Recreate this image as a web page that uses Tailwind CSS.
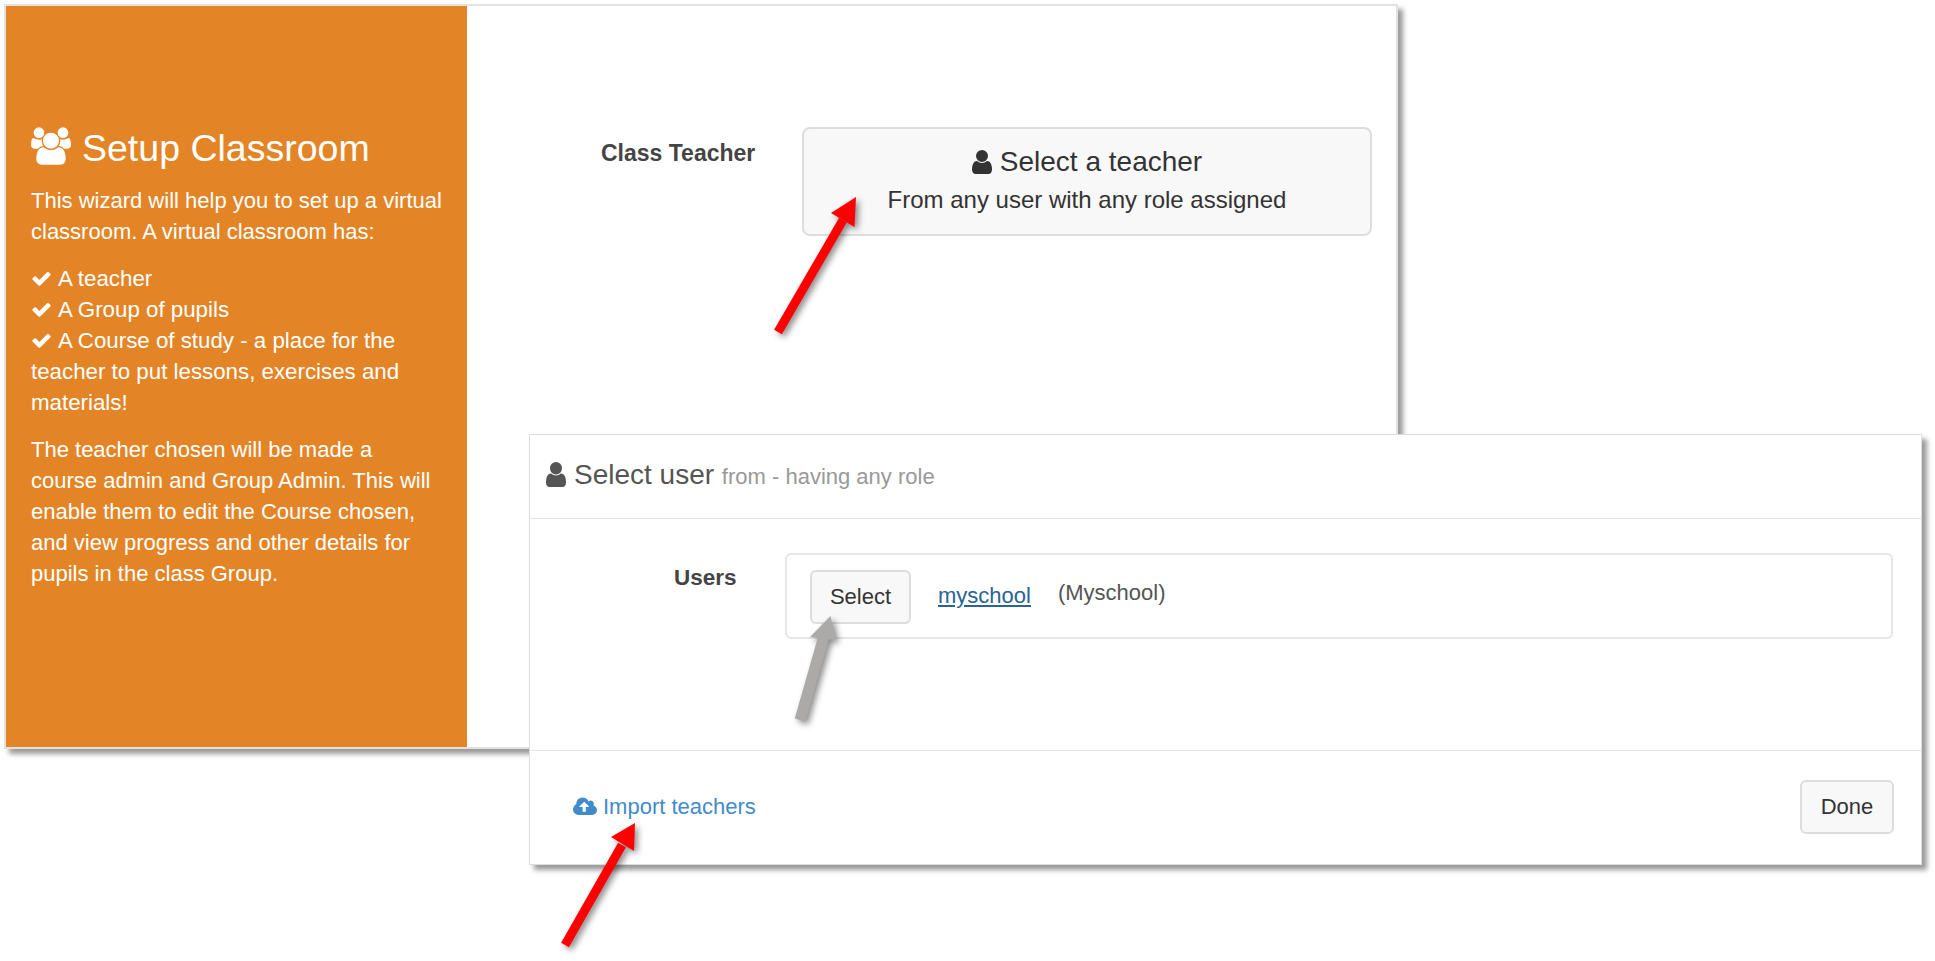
<!DOCTYPE html>
<html lang="en">
<head>
<meta charset="utf-8">
<title>Setup Classroom</title>
<script src="https://cdn.jsdelivr.net/npm/@tailwindcss/browser@4"></script>
</head>
<body class="bg-white font-['Liberation_Sans',Arial,sans-serif] text-[#333] overflow-hidden">
<div class="relative w-[1935px] h-[961px] overflow-hidden">

  <!-- Wizard window -->
  <section class="absolute left-[4px] top-[4px] w-[1394px] h-[745px] flex bg-white border-2 border-[#e2e2e2] shadow-[5px_5px_5px_rgba(0,0,0,0.4)]">
    <aside class="w-[461px] h-full bg-[#e38527] text-white pl-[25px] pr-[20px] pt-[122px] text-[22px] leading-[31px]">
      <h3 class="flex items-center gap-[11px] text-[37.5px] leading-[40px] mb-[17px]">
        <svg class="w-[40px] h-[38px] fill-white -mt-[4px]" viewBox="0 0 1920 1792"><path d="M593 896q-162 5-265 128h-134q-82 0-138-40.5t-56-118.5q0-353 124-353 6 0 43.5 21t97.5 42.5 119 21.5q67 0 133-23-5 37-5 66 0 139 81 256zm1071 637q0 120-73 189.5t-194 69.5h-874q-121 0-194-69.5t-73-189.5q0-53 3.5-103.5t14-109 26.5-108.5 43-97.5 62-81 85.5-53.5 111.5-20q10 0 43 21.5t73 48 107 48 135 21.5 135-21.5 107-48 73-48 43-21.5q61 0 111.5 20t85.5 53.5 62 81 43 97.5 26.5 108.5 14 109 3.5 103.5zm-1024-1277q0 106-75 181t-181 75-181-75-75-181 75-181 181-75 181 75 75 181zm704 384q0 159-112.5 271.5t-271.5 112.5-271.5-112.5-112.5-271.5 112.5-271.5 271.5-112.5 271.5 112.5 112.5 271.5zm576 225q0 78-56 118.5t-138 40.5h-134q-103-123-265-128 81-117 81-256 0-29-5-66 66 23 133 23 59 0 119-21.5t97.5-42.5 43.5-21q124 0 124 353zm-128-609q0 106-75 181t-181 75-181-75-75-181 75-181 181-75 181 75 75 181z"/></svg>
        <span>Setup Classroom</span>
      </h3>
      <p class="mb-[16px]">This wizard will help you to set up a virtual classroom. A virtual classroom has:</p>
      <p class="mb-[16px] text-[22.3px]">
        <svg class="inline-block w-[21px] h-[21px] fill-white align-[-3px] mr-[6px]" viewBox="0 0 1792 1792"><path d="M1671 566q0 40-28 68l-724 724-136 136q-28 28-68 28t-68-28l-136-136-362-362q-28-28-28-68t28-68l136-136q28-28 68-28t68 28l294 295 656-657q28-28 68-28t68 28l136 136q28 28 28 68z"/></svg>A teacher<br>
        <svg class="inline-block w-[21px] h-[21px] fill-white align-[-3px] mr-[6px]" viewBox="0 0 1792 1792"><path d="M1671 566q0 40-28 68l-724 724-136 136q-28 28-68 28t-68-28l-136-136-362-362q-28-28-28-68t28-68l136-136q28-28 68-28t68 28l294 295 656-657q28-28 68-28t68 28l136 136q28 28 28 68z"/></svg>A Group of pupils<br>
        <svg class="inline-block w-[21px] h-[21px] fill-white align-[-3px] mr-[6px]" viewBox="0 0 1792 1792"><path d="M1671 566q0 40-28 68l-724 724-136 136q-28 28-68 28t-68-28l-136-136-362-362q-28-28-28-68t28-68l136-136q28-28 68-28t68 28l294 295 656-657q28-28 68-28t68 28l136 136q28 28 28 68z"/></svg>A Course of study - a place for the teacher to put lessons, exercises and materials!
      </p>
      <p>The teacher chosen will be made a<br>course admin and Group Admin. This will enable them to edit the Course chosen, and view progress and other details for pupils in the class Group.</p>
    </aside>
    <div class="flex-1 flex items-start pt-[121px] pl-[134px]">
      <label class="w-[201px] pt-[12px] font-bold text-[23px] leading-[28px] text-[#444]">Class Teacher</label>
      <button class="w-[570px] h-[109px] rounded-[8px] border-2 border-[#ddd] bg-[#f8f8f8] flex flex-col items-center justify-center text-[#333]">
        <span class="flex items-center gap-[8px] text-[28px] leading-[36px] mb-[5px] -mt-[4px]">
          <svg class="w-[20px] h-[24px] fill-[#333]" viewBox="256 128 1280 1536" preserveAspectRatio="none"><path d="M1536 1399q0 109-62.5 187t-150.5 78h-854q-88 0-150.5-78t-62.5-187q0-85 8.5-160.5t31.5-152 58.5-131 94-89 134.5-34.5q131 128 313 128t313-128q76 0 134.5 34.5t94 89 58.5 131 31.5 152 8.5 160.5zm-256-887q0 159-112.5 271.5t-271.5 112.5-271.5-112.5-112.5-271.5 112.5-271.5 271.5-112.5 271.5 112.5 112.5 271.5z"/></svg>
          Select a teacher
        </span>
        <span class="text-[24px] leading-[30px]">From any user with any role assigned</span>
      </button>
    </div>
  </section>

  <!-- Select user dialog -->
  <section class="absolute left-[529px] top-[434px] w-[1393px] h-[431px] flex flex-col bg-white border border-[#ddd] shadow-[5px_5px_5px_rgba(0,0,0,0.4)]">
    <header class="h-[84px] shrink-0 border-b border-[#e5e5e5] flex items-center pl-[16px] gap-[8px] pb-[4px]">
      <svg class="w-[20px] h-[25px] fill-[#555]" viewBox="256 128 1280 1536" preserveAspectRatio="none"><path d="M1536 1399q0 109-62.5 187t-150.5 78h-854q-88 0-150.5-78t-62.5-187q0-85 8.5-160.5t31.5-152 58.5-131 94-89 134.5-34.5q131 128 313 128t313-128q76 0 134.5 34.5t94 89 58.5 131 31.5 152 8.5 160.5zm-256-887q0 159-112.5 271.5t-271.5 112.5-271.5-112.5-112.5-271.5 112.5-271.5 271.5-112.5 271.5 112.5 112.5 271.5z"/></svg>
      <h4 class="text-[28px] text-[#555]">Select user <small class="text-[22px] text-[#999]">from - having any role</small></h4>
    </header>
    <div class="h-[231px] shrink-0 flex items-start pt-[34px] pl-[144px]">
      <label class="w-[111px] pt-[11px] font-bold text-[22.5px] leading-[28px] text-[#444]">Users</label>
      <div class="w-[1108px] h-[86px] rounded-[6px] border-2 border-[#e6e6e6] flex items-start pl-[23px] pt-[15px]">
        <button class="w-[101px] h-[54px] pb-[2px] rounded-[6px] border-2 border-[#ddd] bg-[#f8f8f8] text-[22px] text-[#333]">Select</button>
        <a href="#" class="ml-[27px] mt-[12px] text-[22px] leading-[28px] text-[#2a6496] underline">myschool</a>
        <span class="ml-[27px] mt-[9px] text-[22px] leading-[28px] text-[#555]">(Myschool)</span>
      </div>
    </div>
    <footer class="flex-1 border-t border-[#e5e5e5] flex items-center justify-between pl-[43px] pr-[27px] pb-[2px]">
      <a href="#" class="flex items-center gap-[6px] text-[22px] text-[#428bca]">
        <svg class="w-[24px] h-[22px] fill-[#428bca]" viewBox="0 128 1920 1536"><path d="M1280 864q0-14-9-23l-352-352q-9-9-23-9t-23 9l-351 351q-10 12-10 24 0 14 9 23t23 9h224v352q0 13 9.5 22.5t22.5 9.5h192q13 0 22.5-9.5t9.5-22.5v-352h224q13 0 22.5-9.5t9.5-22.5zm640 288q0 159-112.5 271.5t-271.5 112.5h-1088q-185 0-316.5-131.5t-131.5-316.5q0-130 70-240t188-165q-2-30-2-43 0-212 150-362t362-150q156 0 285.5 87t188.5 231q71-62 166-62 106 0 181 75t75 181q0 76-41 138 130 31 213.5 135.5t83.5 238.5z"/></svg>
        Import teachers
      </a>
      <button class="w-[94px] h-[54px] rounded-[6px] border-2 border-[#ddd] bg-[#f8f8f8] text-[22px] text-[#333]">Done</button>
    </footer>
  </section>

  <!-- Callout arrows -->
  <svg class="absolute inset-0 w-[1935px] h-[961px] pointer-events-none drop-shadow-[3px_3px_3px_rgba(0,0,0,0.45)]" viewBox="0 0 1935 961">
    <line x1="778" y1="332" x2="843" y2="220" stroke="#ff0000" stroke-width="9"/>
    <polygon points="856,197 854.5,227 831,213" fill="#ff0000"/>
    <line x1="800" y1="720" x2="824" y2="636" stroke="#aca9a9" stroke-width="11"/>
    <polygon points="830.5,616 836,640 810,637" fill="#aca9a9"/>
    <line x1="565" y1="945" x2="622" y2="845" stroke="#ff0000" stroke-width="9"/>
    <polygon points="635,823 634,851 611,837" fill="#ff0000"/>
  </svg>
</div>
</body>
</html>
